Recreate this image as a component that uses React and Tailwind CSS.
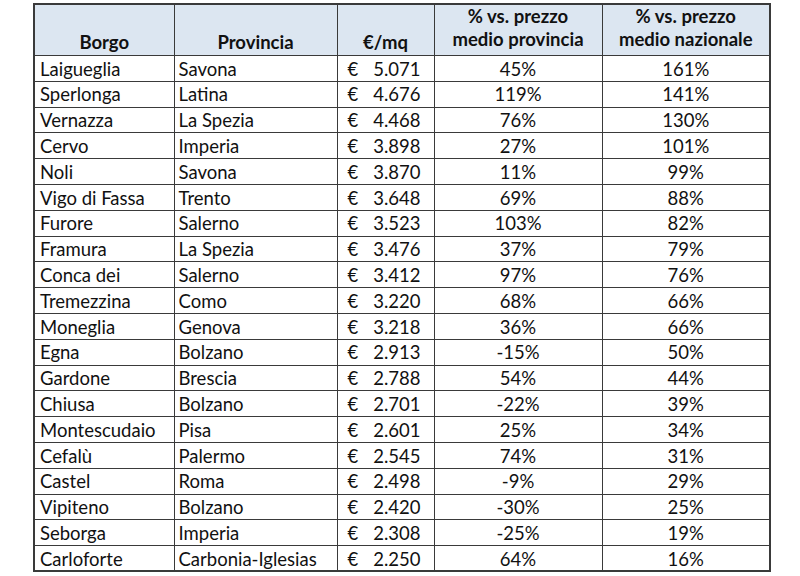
import React from 'react';

const rows = [
  ['Laigueglia', 'Savona', '5.071', '45%', '161%'],
  ['Sperlonga', 'Latina', '4.676', '119%', '141%'],
  ['Vernazza', 'La Spezia', '4.468', '76%', '130%'],
  ['Cervo', 'Imperia', '3.898', '27%', '101%'],
  ['Noli', 'Savona', '3.870', '11%', '99%'],
  ['Vigo di Fassa', 'Trento', '3.648', '69%', '88%'],
  ['Furore', 'Salerno', '3.523', '103%', '82%'],
  ['Framura', 'La Spezia', '3.476', '37%', '79%'],
  ['Conca dei', 'Salerno', '3.412', '97%', '76%'],
  ['Tremezzina', 'Como', '3.220', '68%', '66%'],
  ['Moneglia', 'Genova', '3.218', '36%', '66%'],
  ['Egna', 'Bolzano', '2.913', '-15%', '50%'],
  ['Gardone', 'Brescia', '2.788', '54%', '44%'],
  ['Chiusa', 'Bolzano', '2.701', '-22%', '39%'],
  ['Montescudaio', 'Pisa', '2.601', '25%', '34%'],
  ['Cefalù', 'Palermo', '2.545', '74%', '31%'],
  ['Castel', 'Roma', '2.498', '-9%', '29%'],
  ['Vipiteno', 'Bolzano', '2.420', '-30%', '25%'],
  ['Seborga', 'Imperia', '2.308', '-25%', '19%'],
  ['Carloforte', 'Carbonia-Iglesias', '2.250', '64%', '16%'],
];

const App = () => {
  return (
    <div className="w-[800px] h-[576px] bg-white pl-[33px] pt-[3px] text-[#111]" style={{ fontFamily: 'Lato, "Open Sans", sans-serif' }}>
      <table className="table-fixed border-collapse border-2 border-[#3a3a3a] w-[736px] text-[18.5px] leading-none">
        <colgroup>
          <col className="w-[140px]" />
          <col className="w-[163px]" />
          <col className="w-[97px]" />
          <col className="w-[168px]" />
          <col className="w-[168px]" />
        </colgroup>
        <thead>
          <tr className="h-[51px] bg-[#dce6f1] font-bold">
            <th className="border border-[#3a3a3a] align-bottom pb-[4px] text-center">Borgo</th>
            <th className="border border-[#3a3a3a] align-bottom pb-[4px] text-center">Provincia</th>
            <th className="border border-[#3a3a3a] align-bottom pb-[4px] text-center">€/mq</th>
            <th className="border border-[#3a3a3a] align-bottom pb-[4px] text-center leading-[23px]">
              % vs. prezzo<br />medio provincia
            </th>
            <th className="border border-[#3a3a3a] align-bottom pb-[4px] text-center leading-[23px]">
              % vs. prezzo<br />medio nazionale
            </th>
          </tr>
        </thead>
        <tbody>
          {rows.map(r => (
            <tr key={r[0]} className="h-[25.8px]">
              <td className="border border-[#3a3a3a] pl-[5px] pt-[1px] whitespace-nowrap">{r[0]}</td>
              <td className="border border-[#3a3a3a] pl-[4px] pt-[1px] whitespace-nowrap">{r[1]}</td>
              <td className="border border-[#3a3a3a] pt-[1px]">
                <div className="flex justify-between pl-[10px] pr-[13px]">
                  <span>€</span>
                  <span>{r[2]}</span>
                </div>
              </td>
              <td className="border border-[#3a3a3a] text-center pt-[1px]">{r[3]}</td>
              <td className="border border-[#3a3a3a] text-center pt-[1px]">{r[4]}</td>
            </tr>
          ))}
        </tbody>
      </table>
    </div>
  );
};

export default App;
